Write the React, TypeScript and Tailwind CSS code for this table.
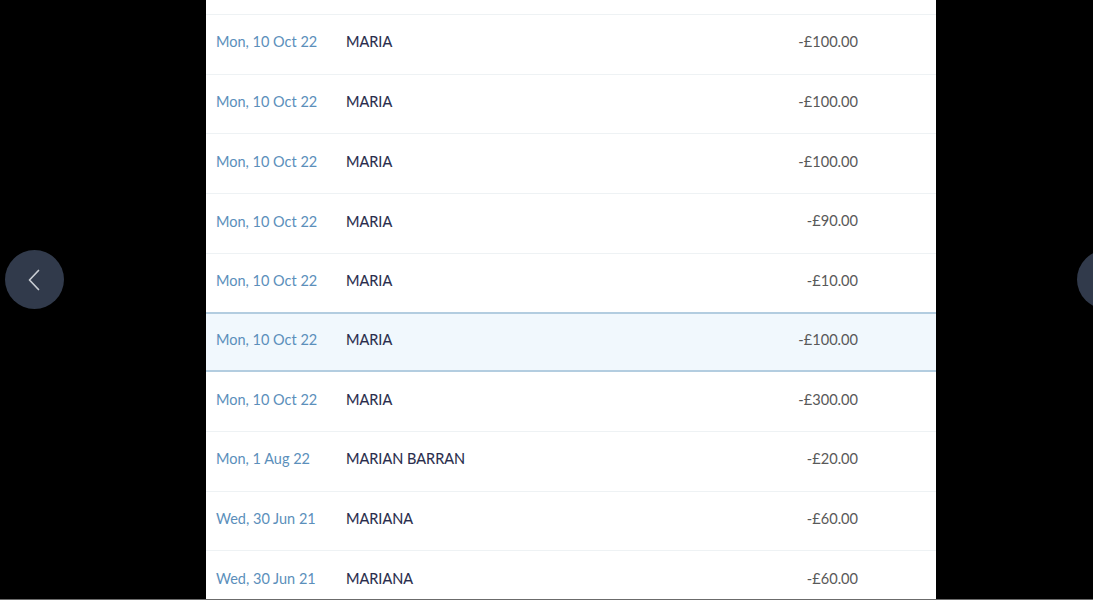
const rows = [
  { date: 'Mon, 10 Oct 22', name: 'MARIA', amount: '-£100.00' },
  { date: 'Mon, 10 Oct 22', name: 'MARIA', amount: '-£100.00' },
  { date: 'Mon, 10 Oct 22', name: 'MARIA', amount: '-£100.00' },
  { date: 'Mon, 10 Oct 22', name: 'MARIA', amount: '-£90.00' },
  { date: 'Mon, 10 Oct 22', name: 'MARIA', amount: '-£10.00' },
  { date: 'Mon, 10 Oct 22', name: 'MARIA', amount: '-£100.00', active: true },
  { date: 'Mon, 10 Oct 22', name: 'MARIA', amount: '-£300.00' },
  { date: 'Mon, 1 Aug 22', name: 'MARIAN BARRAN', amount: '-£20.00' },
  { date: 'Wed, 30 Jun 21', name: 'MARIANA', amount: '-£60.00' },
  { date: 'Wed, 30 Jun 21', name: 'MARIANA', amount: '-£60.00' },
]

export default function App() {
  return (
    <div className="relative w-[1093px] h-[600px] bg-black overflow-hidden font-['Lato','Open_Sans',sans-serif]">
      <div className="ml-[206px] w-[730px] h-full bg-white flex flex-col">
        {/* end of the previous row */}
        <div className="h-[15px] shrink-0 border-b-[1.5px] border-[#eef2f4]" />
        {rows.map((row, i) => (
          <div
            key={i}
            className={`h-[59.7px] shrink-0 flex items-center pl-[10px] pr-[78px] pb-[4px] ${
              row.active
                ? 'bg-[#f1f8fd] border-y-2 border-[#b3cde0] -mt-[1px]'
                : 'border-b-[1.5px] border-[#eef2f4]'
            }`}
          >
            <span className="w-[130px] text-[14.5px] text-[#5b8fbb]">{row.date}</span>
            <span className="flex-1 text-[14.5px] text-[#2a2d4c] [-webkit-text-stroke:0.1px_#2a2d4c]">{row.name}</span>
            <span className="text-[14.6px] text-[#595959]">{row.amount}</span>
          </div>
        ))}
      </div>

      <button className="absolute left-[5px] top-[250px] w-[59px] h-[59px] rounded-full bg-[#313a4b] flex items-center justify-center">
        <svg width="12" height="22" viewBox="0 0 12 22" fill="none" className="-ml-[2px] mt-[1px]">
          <path d="M10.5 1.5 L1.5 11 L10.5 20.5" stroke="#c9cdd3" strokeWidth="1.7" strokeLinecap="round" strokeLinejoin="round" />
        </svg>
      </button>
      <div className="absolute left-[1077px] top-[250px] w-[59px] h-[59px] rounded-full bg-[#313a4b]" />

      <div className="absolute left-0 bottom-0 w-full h-px bg-[#6b6b6b]" />
    </div>
  )
}
